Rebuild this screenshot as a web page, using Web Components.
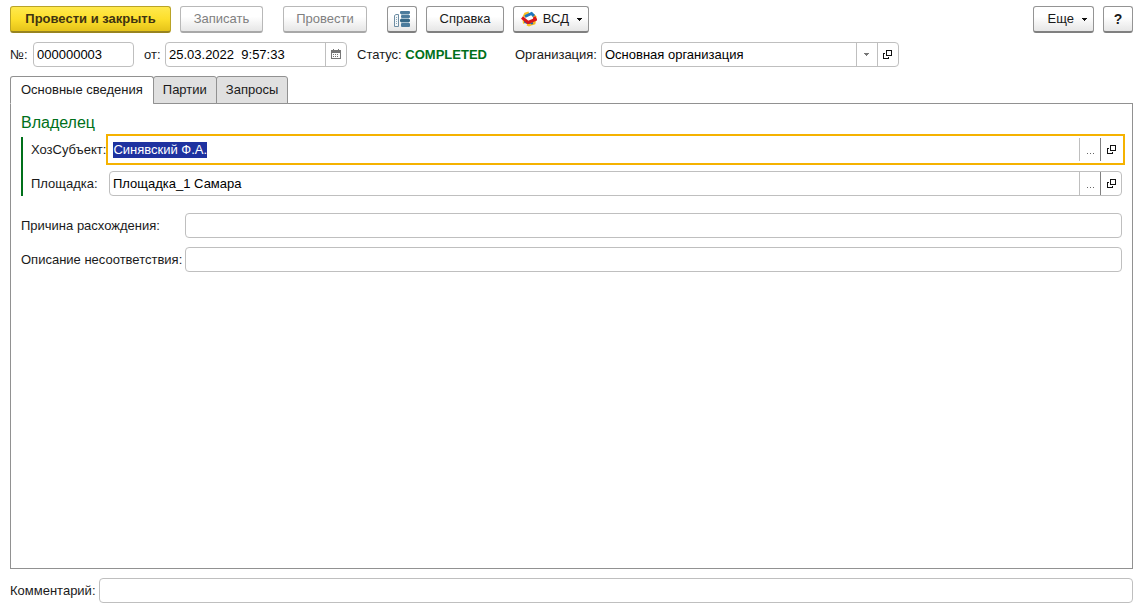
<!DOCTYPE html>
<html lang="ru">
<head>
<meta charset="utf-8">
<title>Документ 000000003</title>
<style>
  body { margin: 0; font: 13px/16px "Liberation Sans", Arial, sans-serif; color: #1a1a1a; background: #fff; }
</style>
</head>
<body>
<document-form></document-form>

<script>
const define = (name, html, setup) => {
  const template = document.createElement('template');
  template.innerHTML = html;
  customElements.define(name, class extends HTMLElement {
    connectedCallback() {
      if (this.shadowRoot) return;
      this.attachShadow({ mode: 'open' }).append(template.content.cloneNode(true));
      if (setup) setup(this, this.shadowRoot);
    }
  });
};

const icons = {
  list: `<svg width="18" height="18" viewBox="0 0 18 18"><path d="M1.5 5.5 3 4.500h2.500v12h-4z" fill="#f4f7f9" stroke="#6d8da3"/><path d="M3.500 7v1m0 1v1m0 1v1m0 1v1" stroke="#8fa9ba"/><rect x="7" y="1" width="10" height="3" rx="1" fill="#4b7b9c"/><rect x="8" y="5" width="9" height="3" rx="1" fill="#4b7b9c"/><rect x="7" y="9" width="10" height="3" rx="1" fill="#366887"/><rect x="8" y="13" width="9" height="4" rx="1" fill="#4b7b9c"/><path d="M8 4.500h8M8 8.500h8M8 12.500h8" stroke="#a6c0cf"/></svg>`,
  vsd: `<svg width="16" height="16" viewBox="0 0 16 16" fill="none" stroke-width="3"><path d="M3.500 12.500 3 9M3 6 4.500 3 8 2" stroke="#ffc01e"/><path d="M12 4l2 2-1 6-3 1" stroke="#f9b51b"/><path d="M4 5.500 10.500 2.500 13 5" stroke="#1f76bd"/><path d="M4 8v3l4 2 4-1" stroke="#1f66ae" stroke-width="2"/><path d="M6 13.500 8 14.500 10 13.500" stroke="#ffc01e" stroke-width="2"/><path d="M1 6.500 7 11.500 14.500 8.500 13 6" stroke="#d9151c"/></svg>`,
  calendar: `<svg width="10" height="11" viewBox="0 0 10 11" shape-rendering="crispEdges"><path d="M0 1h2V0h1v1h4V0h1v1h2v9H0z" fill="#777"/><path d="M1 4h8v5H1z" fill="#fff"/><path d="M2 5h1v1H2zm2 0h1v1H4zm2 0h1v1H6zM2 7h1v1H2zm2 0h1v1H4zm2 0h1v1H6z" fill="#777"/></svg>`,
  drop: `<svg width="5" height="3" viewBox="0 0 5 3" shape-rendering="crispEdges"><path d="M0 0h5v1H4v1H3v1H2V2H1V1H0z" fill="#777"/></svg>`,
  open: `<svg width="9" height="9" viewBox="0 0 9 9" shape-rendering="crispEdges"><path fill-rule="evenodd" d="M3 0h6v6H3zM4 1v4h4V1zM0 3h2v1H1v4h4V7h1v2H0z" fill="#111"/></svg>`,
  dots: `<svg width="7" height="1" viewBox="0 0 7 1" shape-rendering="crispEdges"><path d="M0 0h1v1H0zm3 0h1v1H3zm3 0h1v1H6z" fill="#666"/></svg>`
};

define('ui-button', `
  <style>
    :host { display: block; flex: none; }
    button { box-sizing: border-box; display: flex; align-items: center; justify-content: center; gap: 6px;
      width: 100%; height: 27px; padding: 0 12px; font: inherit; color: #1a1a1a; white-space: nowrap;
      border: 1px solid #949494; border-bottom: 2px solid #808080; border-radius: 3px;
      background: linear-gradient(#fff 40%, #e6e6e6); }
    :host([kind=primary]) button { font-weight: bold; color: #3f3311; border-color: #b9a327 #b9a327 #988420;
      background: linear-gradient(#ffe94d, #fddf2c 50%, #e5c31a); }
    button:disabled { color: #808080; border-color: #b8b8b8 #b8b8b8 #a8a8a8; }
    :host([compact]) button { padding: 0 5px; }
    :host([menu]) button { justify-content: flex-end; padding: 0 6px; }
    .arrow { display: none; margin-left: 2px; }
    :host([menu]) .arrow { display: block; }
    ::slotted(b) { font-size: 14px; }
    svg { display: block; }
  </style>
  <button type="button"><slot></slot><svg class="arrow" width="5" height="3" viewBox="0 0 5 3" shape-rendering="crispEdges" aria-hidden="true"><path d="M0 0h5v1H4v1H3v1H2V2H1V1H0z" fill="#111"/></svg></button>
`, (host, root) => {
  const button = root.querySelector('button');
  button.disabled = host.hasAttribute('disabled');
  if (host.hasAttribute('icon')) button.insertAdjacentHTML('afterbegin', icons[host.getAttribute('icon')]);
  if (host.title) button.setAttribute('aria-label', host.title);
});

define('ui-field', `
  <style>
    :host { display: flex; align-items: center; min-width: 0; }
    label { flex: none; box-sizing: border-box; min-width: var(--label-width, 0); padding-right: 3px; white-space: nowrap; }
    .box { box-sizing: border-box; display: flex; flex: 1; min-width: 0; height: 25px;
      border: 1px solid #bfbfbf; border-radius: 4px; background: #fff; }
    input { flex: 1; min-width: 0; width: 0; padding: 0 3px; border: 0; outline: 0; background: none; font: inherit; color: #000; }
    input::selection { background: #1e32a0; color: #fff; }
    button { display: grid; place-items: center; flex: none; box-sizing: border-box; width: 21px; padding: 0; border: 0;
      border-left: 1px solid #bfbfbf; background: none; }
    .dots { padding-top: 8px; }
    .dots + button { border-left-color: #808080; }
    :host([active]) .box { border-color: transparent; outline: 2px solid #f5b200; outline-offset: 1px; border-radius: 0; }
    svg { display: block; }
  </style>
  <label for="input"><slot></slot></label>
  <div class="box"><input id="input" type="text" autocomplete="off" spellcheck="false"></div>
`, (host, root) => {
  const names = { calendar: 'Выбрать дату', drop: 'Показать список', open: 'Открыть', dots: 'Выбрать' };
  const input = root.querySelector('input');
  input.value = host.getAttribute('value') || '';
  for (const key of (host.getAttribute('actions') || '').split(' ').filter(Boolean)) {
    const button = document.createElement('button');
    button.type = 'button';
    button.className = key;
    button.setAttribute('aria-label', names[key]);
    button.innerHTML = icons[key];
    root.querySelector('.box').append(button);
  }
  if (host.hasAttribute('active')) { input.focus(); input.select(); }
});

define('ui-toolbar', `
  <style>
    :host { display: flex; gap: 9px; }
    .end { display: flex; gap: 9px; margin-left: auto; }
  </style>
  <slot></slot><div class="end"><slot name="end"></slot></div>
`);

define('ui-tabs', `
  <style>
    :host { display: flex; flex-direction: column; }
    .tabs { display: flex; position: relative; z-index: 1; }
    button { box-sizing: border-box; height: 28px; padding: 0 9px; margin: 0 0 -1px -1px; font: inherit; color: #1a1a1a;
      border: 1px solid #919191; border-radius: 3px 3px 0 0; background: #e0e0e0; }
    button:first-child { margin-left: 0; padding: 0 10px; }
    button[aria-selected=true] { background: #fff; border-bottom-color: #fff; }
    .panel { flex: 1; padding: 10px; border: 1px solid #919191; }
  </style>
  <div class="tabs" role="tablist"></div>
  <div class="panel" role="tabpanel"><slot></slot></div>
`, (host, root) => {
  host.getAttribute('tabs').split('|').forEach((text, index) => {
    const tab = document.createElement('button');
    tab.type = 'button';
    tab.setAttribute('role', 'tab');
    tab.setAttribute('aria-selected', String(index === 0));
    tab.textContent = text;
    root.querySelector('.tabs').append(tab);
  });
});

define('ui-group', `
  <style>
    :host { display: block; }
    h2 { margin: 0; font-size: 16px; line-height: 18px; font-weight: normal; color: #00701a; }
    .body { display: flex; flex-direction: column; gap: 9px; margin-top: 5px; padding-left: 8px; border-left: 2px solid #00701a; }
  </style>
  <h2><slot name="title"></slot></h2>
  <div class="body"><slot></slot></div>
`);

define('document-form', `
  <style>
    :host { box-sizing: border-box; display: flex; flex-direction: column; gap: 9px; min-height: 100vh; padding: 6px 15px 8px 10px; }
    .header { display: flex; flex-wrap: wrap; align-items: center; }
    .number { --label-width: 23px; width: 124px; margin-right: 10px; }
    .date { --label-width: 21px; width: 203px; margin-right: 10px; }
    .status { margin-right: 28px; }
    .status strong { color: #00701a; }
    .org { --label-width: 86px; width: 384px; }
    ui-tabs { flex: 1; }
    .owner { --label-width: 78px; }
    .details { --label-width: 164px; display: flex; flex-direction: column; gap: 9px; margin-top: 17px; }
    .gap { margin-left: 11px; }
    .w-primary { width: 161px; }
    .w-save { width: 83px; }
    .w-post { width: 84px; }
    .w-help { width: 78px; }
    .w-menu { width: 76px; }
    .w-more { width: 61px; }
    .w-icon { width: 30px; }
  </style>
  <ui-toolbar>
    <ui-button class="w-primary" kind="primary">Провести и закрыть</ui-button>
    <ui-button class="w-save" disabled>Записать</ui-button>
    <ui-button class="w-post gap" disabled>Провести</ui-button>
    <ui-button class="w-icon gap" compact icon="list" title="Движения документа"></ui-button>
    <ui-button class="w-help">Справка</ui-button>
    <ui-button class="w-menu" menu icon="vsd">ВСД</ui-button>
    <ui-button slot="end" class="w-more" menu>Еще</ui-button>
    <ui-button slot="end" class="w-icon" compact><b>?</b></ui-button>
  </ui-toolbar>
  <div class="header">
    <ui-field class="number" value="000000003">№:</ui-field>
    <ui-field class="date" value="25.03.2022  9:57:33" actions="calendar">от:</ui-field>
    <span class="status">Статус: <strong>COMPLETED</strong></span>
    <ui-field class="org" value="Основная организация" actions="drop open">Организация:</ui-field>
  </div>
  <ui-tabs tabs="Основные сведения|Партии|Запросы">
    <ui-group class="owner">
      <span slot="title">Владелец</span>
      <ui-field active value="Синявский Ф.А." actions="dots open">ХозСубъект:</ui-field>
      <ui-field value="Площадка_1 Самара" actions="dots open">Площадка:</ui-field>
    </ui-group>
    <div class="details">
      <ui-field>Причина расхождения:</ui-field>
      <ui-field>Описание несоответствия:</ui-field>
    </div>
  </ui-tabs>
  <ui-field>Комментарий:</ui-field>
`);
</script>
</body>
</html>
